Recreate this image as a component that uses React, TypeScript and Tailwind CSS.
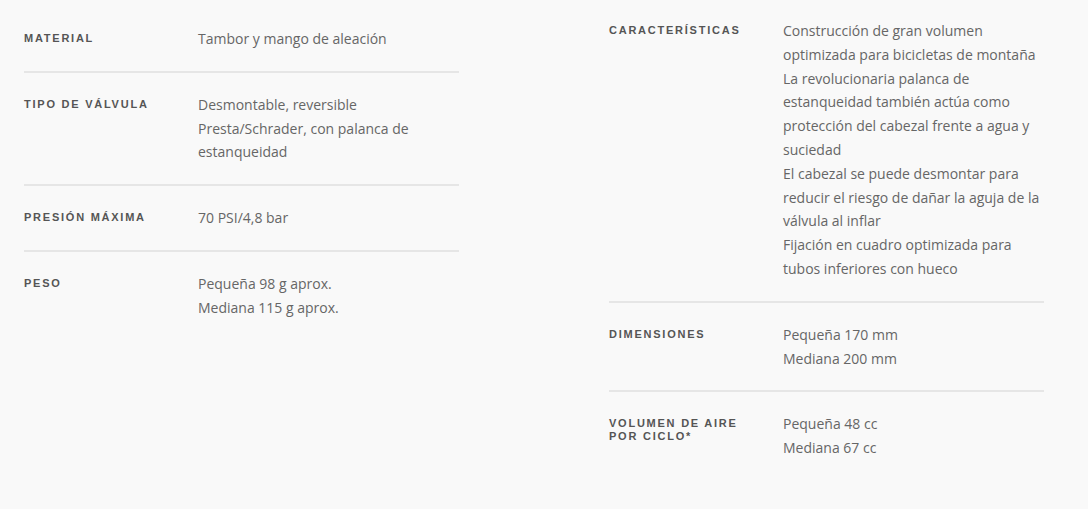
const left = [
  { label: ["Material"], values: ["Tambor y mango de aleación"] },
  { label: ["Tipo de válvula"], values: ["Desmontable, reversible", "Presta/Schrader, con palanca de estanqueidad"] },
  { label: ["Presión máxima"], values: ["70 PSI/4,8 bar"] },
  { label: ["Peso"], values: ["Pequeña 98 g aprox.", "Mediana 115 g aprox."] },
];

const right = [
  {
    label: ["Características"],
    values: [
      "Construcción de gran volumen optimizada para bicicletas de montaña",
      "La revolucionaria palanca de estanqueidad también actúa como protección del cabezal frente a agua y suciedad",
      "El cabezal se puede desmontar para reducir el riesgo de dañar la aguja de la válvula al inflar",
      "Fijación en cuadro optimizada para tubos inferiores con hueco",
    ],
  },
  { label: ["Dimensiones"], values: ["Pequeña 170 mm", "Mediana 200 mm"] },
  { label: ["Volumen de aire", "por ciclo*"], values: ["Pequeña 48 cc", "Mediana 67 cc"] },
];

type Spec = { label: string[]; values: string[] };

function SpecRow({ spec, last, first }: { spec: Spec; last: boolean; first: boolean }) {
  return (
    <div
      className={`flex pb-5 ${first ? "pt-0" : "pt-5"} ${last ? "" : "border-b-2 border-[#e6e6e6]"}`}
    >
      <div className="w-[174px] shrink-0 pt-[5px] text-[11px] leading-[13px] font-bold uppercase tracking-[0.16em] text-[#555] font-['Liberation_Sans',Arial,sans-serif]">
        {spec.label.map((l) => (
          <div key={l}>{l}</div>
        ))}
      </div>
      <div className="flex-1 text-[14px] leading-[1.7] text-[#666] font-['Open_Sans',sans-serif]">
        {spec.values.map((v) => (
          <p key={v}>{v}</p>
        ))}
      </div>
    </div>
  );
}

export default function App() {
  return (
    <div className="min-h-[509px] w-full bg-[#f9f9f9]">
      <div className="flex gap-[150px] pl-6">
        <div className="w-[435px] pt-[27px]">
          {left.map((s, i) => (
            <SpecRow key={i} spec={s} first={i === 0} last={i === left.length - 1} />
          ))}
        </div>
        <div className="w-[435px] pt-[19px]">
          {right.map((s, i) => (
            <SpecRow key={i} spec={s} first={i === 0} last={i === right.length - 1} />
          ))}
        </div>
      </div>
    </div>
  );
}
